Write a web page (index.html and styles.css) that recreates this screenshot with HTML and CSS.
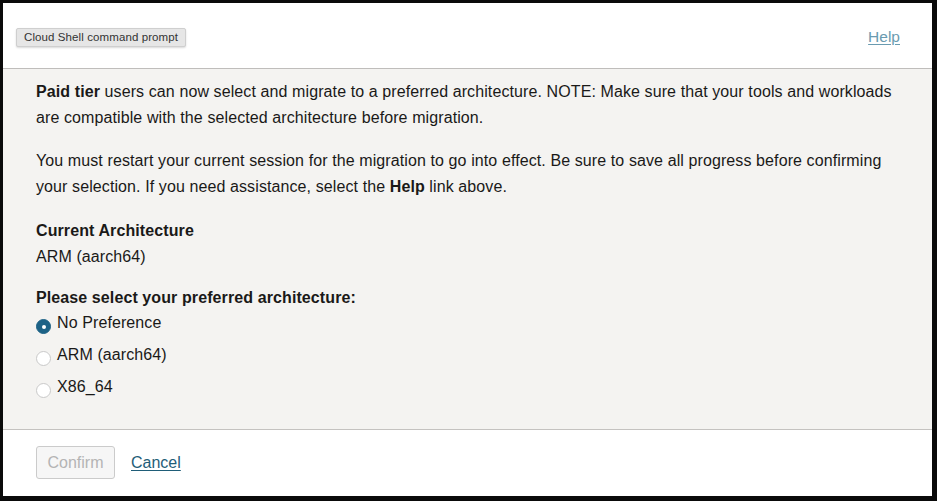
FILE: index.html
```html
<!DOCTYPE html>
<html lang="en">
<head>
<meta charset="utf-8">
<title>Cloud Shell architecture</title>
<link rel="stylesheet" href="styles.css">
</head>
<body>
<div class="dialog">
  <header class="dlg-header">
    <span class="pill">Cloud Shell command prompt</span>
    <a class="help" href="#">Help</a>
  </header>
  <section class="dlg-body">
    <p class="para"><b>Paid tier</b> users can now select and migrate to a preferred architecture. NOTE: Make sure that your tools and workloads are compatible with the selected architecture before migration.</p>
    <p class="para">You must restart your current session for the migration to go into effect. Be sure to save all progress before confirming your selection. If you need assistance, select the <b>Help</b> link above.</p>
    <div class="current">
      <div class="label">Current Architecture</div>
      <div class="value">ARM (aarch64)</div>
    </div>
    <div class="select-label">Please select your preferred architecture:</div>
    <div class="options">
      <label class="option"><span class="radio checked"></span><span>No Preference</span></label>
      <label class="option"><span class="radio"></span><span>ARM (aarch64)</span></label>
      <label class="option"><span class="radio"></span><span>X86_64</span></label>
    </div>
  </section>
  <footer class="dlg-footer">
    <button class="confirm" disabled>Confirm</button>
    <a class="cancel" href="#">Cancel</a>
  </footer>
</div>
</body>
</html>
```
FILE: styles.css
```css
html, body {
  margin: 0;
  padding: 0;
  background: #0a0a0a;
}
body {
  font-family: "Liberation Sans", Arial, Helvetica, sans-serif;
  color: #1a1918;
  font-size: 16px;
}
.dialog {
  margin: 3px 5px 5px 3px;
  height: 493px;
  background: #ffffff;
  display: flex;
  flex-direction: column;
}
.dlg-header {
  height: 65px;
  box-sizing: border-box;
  padding: 25px 32px 0 13px;
  display: flex;
  justify-content: space-between;
  align-items: flex-start;
}
.pill {
  display: inline-block;
  background: #e6e6e6;
  border: 1px solid #cfcfcf;
  box-shadow: 0 1px 2px rgba(0,0,0,0.15);
  border-radius: 2px;
  font-size: 11.5px;
  line-height: 17px;
  padding: 0 7px;
  color: #333;
  letter-spacing: 0.1px;
}
.help {
  line-height: 18px;
  font-size: 15.5px;
  color: #6a9bb0;
  text-decoration: underline;
  text-underline-offset: 2px;
  font-weight: 300;
}
.dlg-body {
  flex: 1;
  background: #f4f3f1;
  border-top: 1px solid #bfbdbb;
  border-bottom: 1px solid #c4c2c0;
  padding: 10px 21px 0 33px;
  line-height: 26px;
  letter-spacing: 0.1px;
}
.para {
  margin: 0 0 17px 0;
  max-width: 872px;
}
.current {
  margin-top: 18px;
}
.label {
  font-weight: bold;
}
.select-label {
  margin-top: 15px;
  font-weight: bold;
  line-height: 25px;
}
.options {
  display: flex;
  flex-direction: column;
  gap: 6px;
}
.option {
  display: flex;
  align-items: flex-start;
  gap: 6px;
}
.radio {
  width: 15px;
  height: 15px;
  box-sizing: border-box;
  border-radius: 50%;
  border: 1px solid #c9c9c9;
  background: #ffffff;
  margin-top: 9px;
  flex: none;
  position: relative;
}
.radio.checked {
  background: #1d6286;
  border-color: #1d6286;
}
.radio.checked::after {
  content: "";
  position: absolute;
  width: 4px;
  height: 4px;
  border-radius: 50%;
  background: #fff;
  left: 4.5px;
  top: 4.5px;
}
.dlg-footer {
  height: 66px;
  box-sizing: border-box;
  padding: 16px 33px 0;
  display: flex;
  align-items: flex-start;
  gap: 16px;
}
.confirm {
  width: 79px;
  height: 33px;
  font-family: inherit;
  font-size: 16px;
  color: #b4b4b4;
  background: #f6f6f6;
  border: 1px solid #cbcbcb;
  border-radius: 3px;
  padding: 0;
}
.cancel {
  line-height: 33px;
  color: #1f5d78;
  text-decoration: underline;
  text-underline-offset: 2px;
}
```
